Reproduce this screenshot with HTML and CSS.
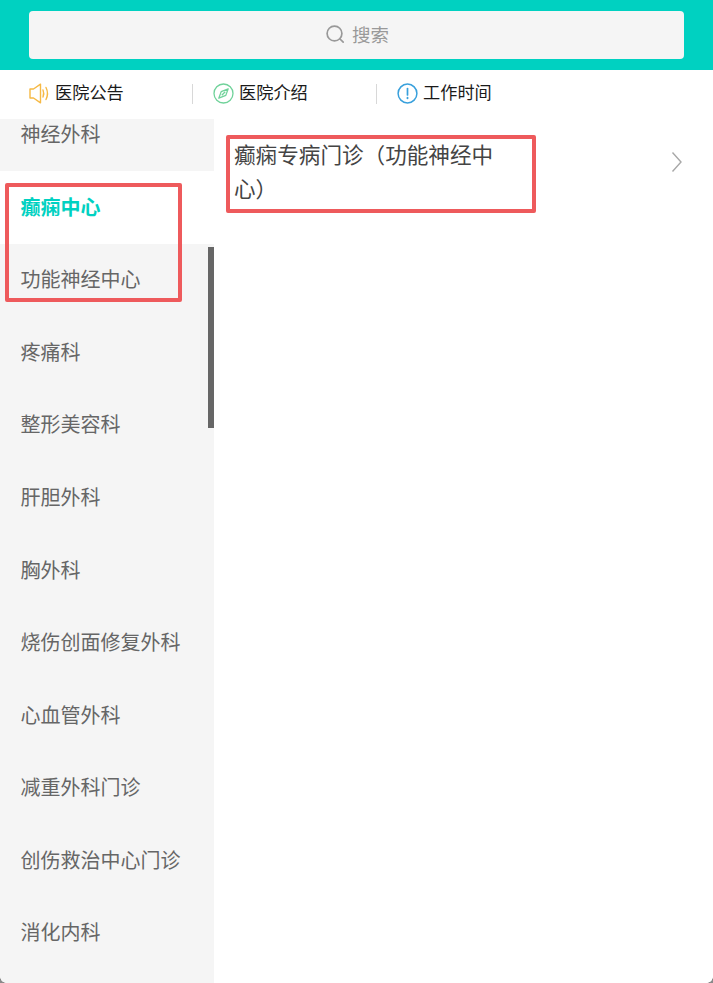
FILE: index.html
```html
<!DOCTYPE html>
<html lang="zh">
<head>
<meta charset="utf-8">
<title>科室</title>
<link rel="stylesheet" href="styles.css">
</head>
<body>
<div class="page">
  <header class="header">
    <div class="search">
      <svg class="search-icon" width="20" height="20" viewBox="0 0 20 20" fill="none" stroke="#999" stroke-width="1.7" stroke-linecap="round"><circle cx="9.500" cy="9.500" r="7.400"/><path d="M15 15l3.200 3.200"/></svg>
      <span class="search-text">搜索</span>
    </div>
  </header>
  <nav class="notice">
    <div class="notice-item first">
      <svg class="notice-icon" width="21" height="21" viewBox="0 0 21 21" fill="none" stroke="#f6b944" stroke-width="1.400" stroke-linejoin="round" stroke-linecap="round"><path d="M1 6h3.500L11.500 1.200v18.600L4.500 15H1z"/><path d="M14 7c.9 2.200.9 4.800 0 7"/><path d="M17 4.500c1.900 3.800 1.900 8.200 0 12"/></svg>
      <span class="notice-text">医院公告</span>
    </div>
    <div class="notice-item second">
      <svg class="notice-icon" width="21" height="21" viewBox="0 0 21 21" fill="none" stroke="#70d29a" stroke-width="1.300" stroke-linejoin="round"><circle cx="10.500" cy="10.500" r="9.500"/><path d="M15.200 5.800l-2.400 6.600-7 2.800 2.400-6.600z"/><path d="M8.800 12.200l3.400-3.400"/></svg>
      <span class="notice-text">医院介绍</span>
    </div>
    <div class="notice-item third">
      <svg class="notice-icon" width="21" height="21" viewBox="0 0 21 21" fill="none" stroke="#38a0dc" stroke-width="1.500" stroke-linecap="round"><circle cx="10.500" cy="10.500" r="9.400"/><path d="M10.500 5.500v6.500" stroke-width="1.700"/><path d="M10.500 14.800v.4" stroke-width="1.900"/></svg>
      <span class="notice-text">工作时间</span>
    </div>
  </nav>
  <main class="content">
    <aside class="sidebar">
      <ul class="dept-list">
        <li class="dept">神经外科</li>
        <li class="dept active">癫痫中心</li>
        <li class="dept">功能神经中心</li>
        <li class="dept">疼痛科</li>
        <li class="dept">整形美容科</li>
        <li class="dept">肝胆外科</li>
        <li class="dept">胸外科</li>
        <li class="dept">烧伤创面修复外科</li>
        <li class="dept">心血管外科</li>
        <li class="dept">减重外科门诊</li>
        <li class="dept">创伤救治中心门诊</li>
        <li class="dept">消化内科</li>
      </ul>
      <div class="scrollbar"></div>
    </aside>
    <section class="clinics">
      <div class="clinic">
        <div class="clinic-name">癫痫专病门诊（功能神经中心）</div>
        <svg class="chevron" width="12" height="22" viewBox="0 0 12 22" fill="none" stroke="#a8a8a8" stroke-width="1.400"><path d="M1.500 1.500L10 11l-8.500 9.500"/></svg>
      </div>
    </section>
  </main>
  <div class="mark mark-side"></div>
  <div class="mark mark-clinic"></div>
  <div class="corner corner-left"></div>
  <div class="corner corner-right"></div>
</div>
</body>
</html>
```

FILE: styles.css
```css
* { box-sizing: border-box; }
html, body { margin: 0; padding: 0; height: 100%; }
body {
  background: #fff;
  font-family: "Noto Sans CJK SC", "Noto Sans", sans-serif;
  overflow: hidden;
}
.page {
  position: relative;
  width: 713px;
  height: 983px;
  display: flex;
  flex-direction: column;
  overflow: hidden;
}
.header {
  height: 70px;
  flex: none;
  background: #00d1c1;
  padding: 11px 29px;
}
.search {
  height: 48px;
  background: #f5f5f5;
  border-radius: 4px;
  padding-bottom: 2px;
  display: flex;
  align-items: center;
  justify-content: center;
  gap: 7px;
  color: #999;
  font-size: 18.500px;
}
.search-icon { flex: none; margin-left: 1px; }
.search-text { padding-bottom: 1px; }
.notice {
  height: 49px;
  flex: none;
  padding-bottom: 2px;
  display: flex;
  align-items: center;
  color: #1a1a1a;
  font-size: 17.200px;
}
.notice-item {
  display: flex;
  align-items: center;
  gap: 5px;
  height: 20px;
}
.notice-icon { flex: none; }
.notice-text { padding-bottom: 5px; }
.notice-item.first { width: 193px; padding-left: 29px; gap: 5px; border-right: 1px solid #d8d8d8; }
.notice-item.second { width: 184px; padding-left: 20px; border-right: 1px solid #d8d8d8; }
.notice-item.third { padding-left: 20px; }
.content {
  flex: 1;
  min-height: 0;
  display: flex;
}
.sidebar {
  position: relative;
  width: 214px;
  flex: none;
  background: #f5f5f5;
  overflow: hidden;
}
.dept-list {
  list-style: none;
  margin: -20.300px 0 0;
  padding: 0;
}
.dept {
  height: 72.550px;
  padding-left: 20.500px;
  padding-bottom: 2.500px;
  display: flex;
  align-items: center;
  font-size: 20px;
  color: #666;
}
.dept.active {
  background: #fff;
  color: #00d1c1;
  font-weight: 700;
}
.scrollbar {
  position: absolute;
  right: 0;
  top: 128px;
  width: 6px;
  height: 181px;
  background: #666;
}
.clinics {
  flex: 1;
  min-width: 0;
  background: #fff;
}
.clinic {
  display: flex;
  align-items: flex-start;
  justify-content: space-between;
  padding: 18px 30px 0 20px;
}
.clinic-name {
  width: 262px;
  font-size: 21.600px;
  line-height: 34px;
  color: #444;
}
.chevron { margin-top: 14px; }
.mark {
  position: absolute;
  border: 4px solid #ee5a5c;
  border-radius: 2px;
}
.mark-side { left: 5px; top: 183px; width: 177px; height: 119px; }
.mark-clinic { left: 226px; top: 135px; width: 310px; height: 78px; }
.corner {
  position: absolute;
  bottom: 0;
  width: 6px;
  height: 6px;
}
.corner-left { left: 0; background: radial-gradient(circle at 100% 0, transparent 5.500px, #8a8a8a 6px); }
.corner-right { right: 0; background: radial-gradient(circle at 0 0, transparent 5.500px, #8a8a8a 6px); }
```
